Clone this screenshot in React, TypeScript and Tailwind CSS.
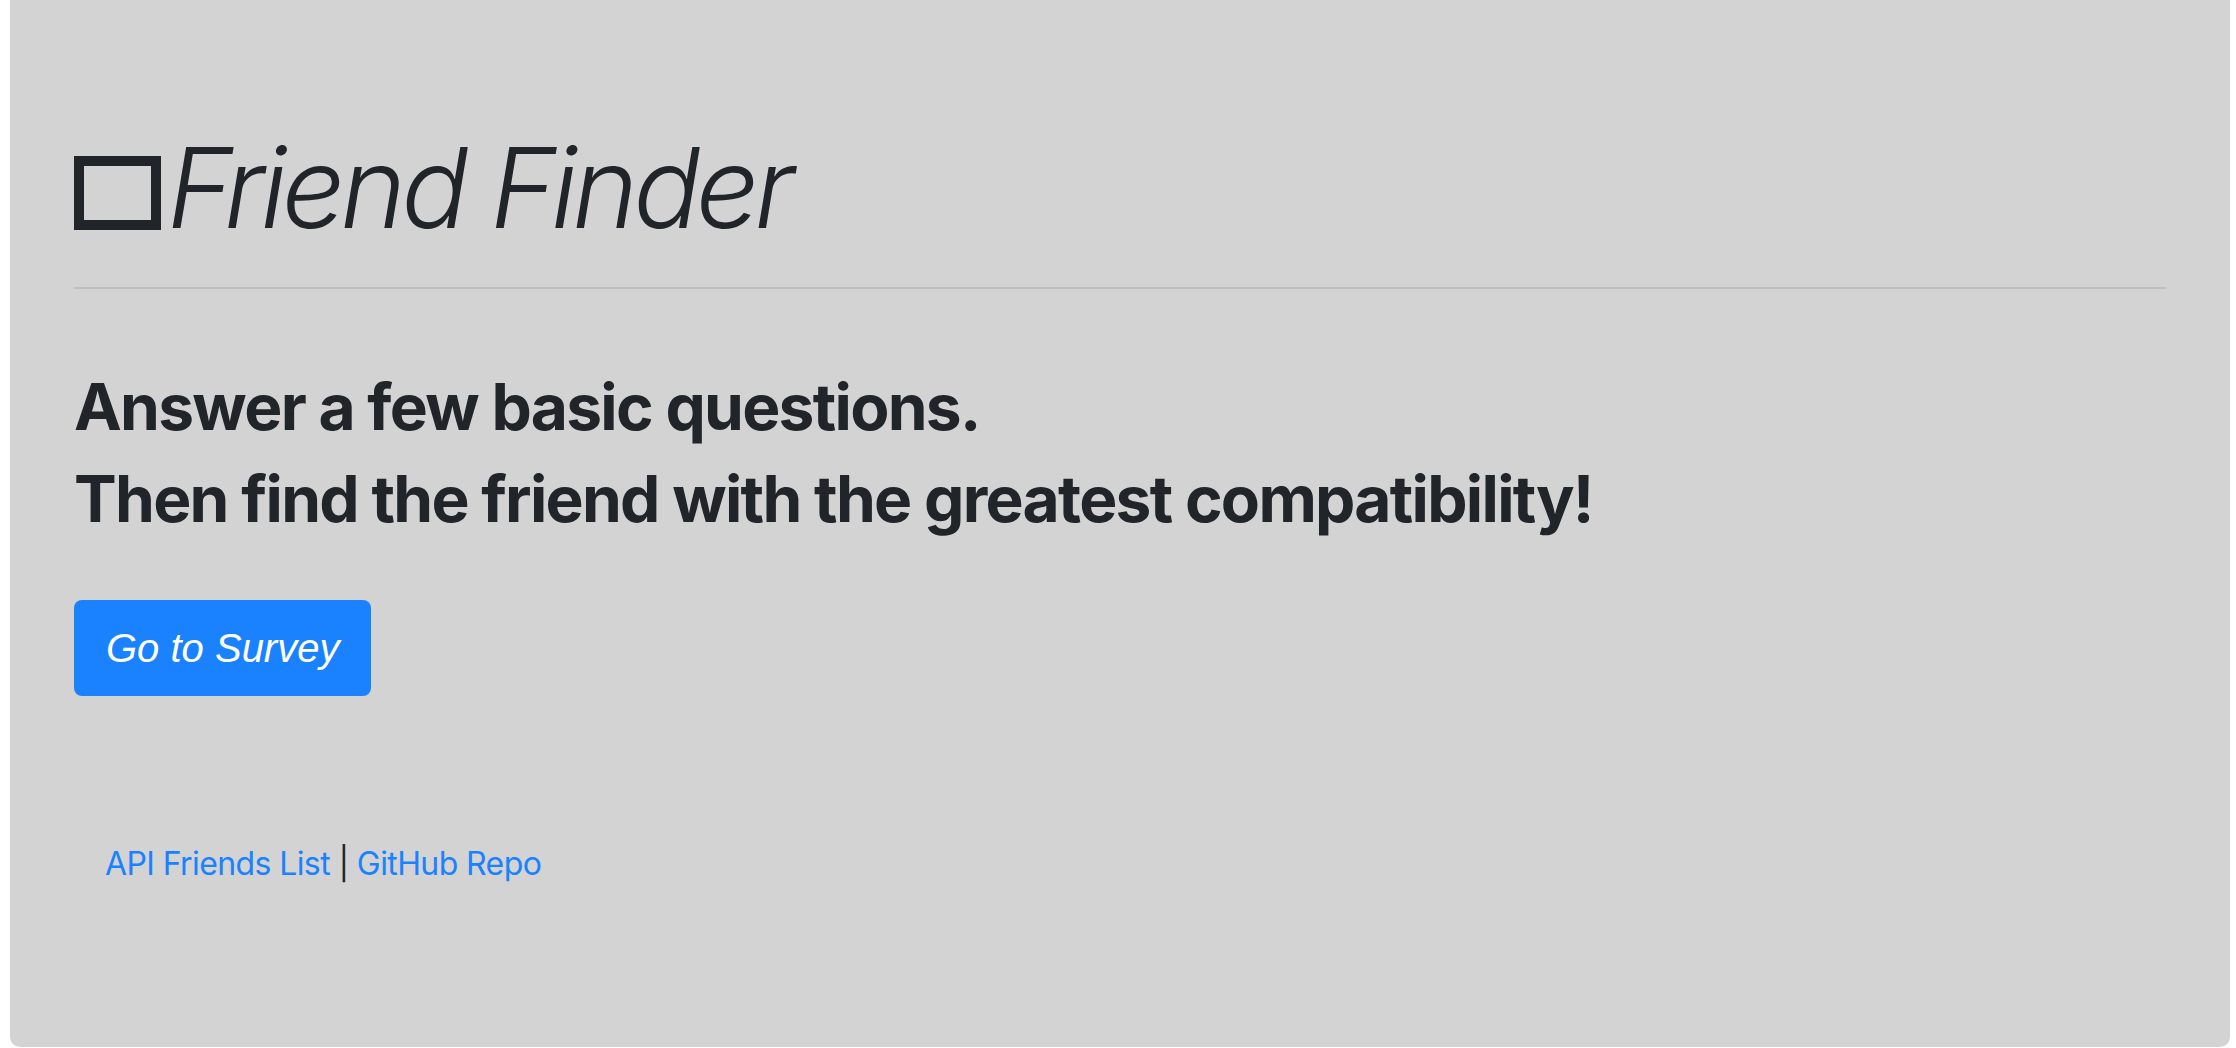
export default function App() {
  return (
    <div className="min-h-screen w-full bg-white pl-[10px] pr-[6px]">
      <div className="h-[1047px] rounded-b-[10px] bg-[#d3d3d3] px-[64px] pt-[120px] text-[#212529]">
        <h1 className="flex items-center font-['Inter',sans-serif] text-[112px] font-light italic leading-[134px] tracking-[-5px]">
          <span className="mr-[6px] mt-[12px] box-border inline-block h-[74px] w-[87px] border-[10px] border-[#212529]" />
          <span>Friend Finder</span>
        </h1>
        <hr className="mt-[33px] border-t-2 border-[#bebebe]" />
        <h2 className="mt-[79px] font-['Inter',sans-serif] text-[64px] font-bold leading-[77px] tracking-[-1.7px]">
          Answer a few basic questions.
        </h2>
        <h2 className="mt-[15px] font-['Inter',sans-serif] text-[64px] font-bold leading-[77px] tracking-[-1.7px]">
          Then find the friend with the greatest compatibility!
        </h2>
        <a
          href="#"
          className="mt-[63px] inline-flex h-[96px] items-center rounded-[8px] bg-[#1a82ff] px-[32px] font-['Liberation_Sans',sans-serif] text-[40px] italic text-white"
        >
          Go to Survey
        </a>
        <div className="mt-[144px] px-[31px] font-['Inter',sans-serif] text-[32px] leading-[48px] tracking-[-0.6px]">
          <a href="#" className="text-[#1a82ff]">API Friends List</a>
          <span className="text-[#212529]">&nbsp;|&nbsp;</span>
          <a href="#" className="text-[#1a82ff]">GitHub Repo</a>
        </div>
      </div>
    </div>
  );
}
